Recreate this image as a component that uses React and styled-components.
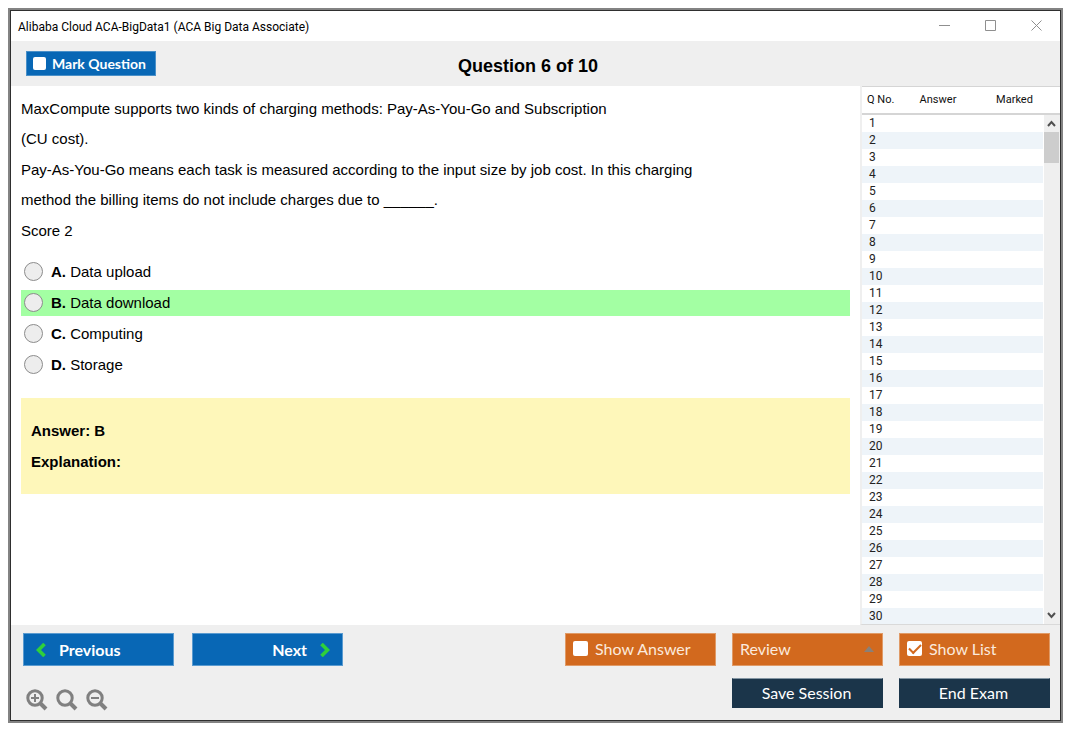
import React, { useState } from "react"
import styled, { createGlobalStyle } from "styled-components"

const GlobalStyle = createGlobalStyle`
  * {
    box-sizing: border-box;
  }
  body {
    margin: 0;
    background-color: #fff;
    color: #000;
    font-family: "Liberation Sans", Arial, sans-serif;
  }
`

const Window = styled.div`
  display: flex;
  flex-direction: column;
  height: calc(100vh - 20px);
  min-height: 400px;
  margin: 8px 12px 12px 8px;
  border: 2px solid #838383;
  outline: 1px solid #2f2f2f;
  outline-offset: -3px;
  padding: 1px;
`

const TitleBar = styled.header`
  display: flex;
  align-items: center;
  flex: none;
  height: 30px;
  padding-left: 7px;
  background-color: #fff;
`

const AppTitle = styled.span`
  flex: 1;
  padding-top: 2px;
  font-family: Roboto, sans-serif;
  font-size: 12px;
`

const WindowButton = styled.button`
  display: flex;
  align-items: center;
  justify-content: center;
  width: 46px;
  height: 28px;
  padding: 0 1px 2px 0;
  border: none;
  background: none;
  color: #8f8f8f;
`

const Toolbar = styled.div`
  display: grid;
  grid-template-columns: 1fr auto 1fr;
  align-items: center;
  flex: none;
  height: 45px;
  padding: 0 30px 0 15px;
  background-color: #efefef;
`

const Heading = styled.h1`
  margin: 0;
  padding-top: 4px;
  font-size: 18px;
  line-height: 22px;
`

const Check = styled.input.attrs({ type: "checkbox" })`
  appearance: none;
  display: grid;
  place-items: center;
  flex: none;
  width: ${({ $size }) => $size}px;
  height: ${({ $size }) => $size}px;
  margin: 0;
  border-radius: 2px;
  background-color: #fff;

  &:checked::before {
    content: "";
    width: 10px;
    height: 5px;
    margin-bottom: 3px;
    border-left: 2px solid #d2691e;
    border-bottom: 2px solid #d2691e;
    transform: rotate(-45deg);
  }
`

const MarkLabel = styled.label`
  display: flex;
  align-items: center;
  justify-self: start;
  gap: 6px;
  width: 130px;
  height: 25px;
  padding: 0 6px;
  border: 1px solid #4a90c8;
  background-color: #0867b5;
  color: #fff;
  font-family: Lato, sans-serif;
  font-size: 14px;
  font-weight: 700;
  white-space: nowrap;
`

const Main = styled.main`
  display: flex;
  flex: 1;
  min-height: 0;
`

const Question = styled.section`
  flex: 1;
  min-width: 0;
  padding: 8px 10px;
  overflow: auto;
  font-size: 15px;
`

const Paragraph = styled.p`
  margin: 0 0 1px;
  line-height: 30px;
`

const Options = styled.div`
  display: grid;
  gap: 5px;
  margin: 13px 0 20px;
`

const Option = styled.label`
  display: flex;
  align-items: center;
  gap: 8px;
  height: 26px;
  padding: 0 0 2px 3px;
  background-color: ${({ $correct }) => ($correct ? "#a3ffa3" : "transparent")};
`

const Radio = styled.input.attrs({ type: "radio" })`
  appearance: none;
  width: 19px;
  height: 19px;
  margin: 0;
  border: 1px solid #8c8c8c;
  border-radius: 50%;
  background-color: #ededed;

  &:checked {
    box-shadow: inset 0 0 0 4px #ededed;
    background-color: #333;
  }
`

const AnswerBox = styled.div`
  padding: 17px 10px;
  background-color: #fef7ba;
  font-weight: 700;
  line-height: 31px;
`

const ListPanel = styled.aside`
  display: flex;
  flex-direction: column;
  flex: none;
  width: 200px;
  border-left: 2px solid #efefef;
  border-bottom: 1px solid #d9d9d9;
  font-family: Roboto, sans-serif;
  font-size: 11px;
`

const ListBody = styled.div`
  display: flex;
  flex: 1;
  min-height: 0;
`

const ListScroll = styled.div`
  flex: 1;
  overflow-y: auto;
  scrollbar-width: none;
`

const QuestionTable = styled.table`
  width: 100%;
  border-collapse: collapse;
  table-layout: fixed;

  th {
    height: 27px;
    padding: 0;
    border-top: 1px solid #d5d5d5;
    border-bottom: 2px solid #d5d5d5;
    color: #111;
    font-weight: 400;
    white-space: nowrap;
  }
  th:first-child {
    padding-left: 5px;
    text-align: left;
  }
  td {
    height: 17px;
    padding: 0 0 0 7px;
    color: #222;
    font-size: 12px;
    line-height: 17px;
  }
  tbody tr:nth-child(even) {
    background-color: #eef4f9;
  }
`

const NumberCol = styled.col`
  width: 45px;
`

const AnswerCol = styled.col`
  width: 62px;
`

const ScrollTrack = styled.div`
  display: flex;
  flex-direction: column;
  justify-content: space-between;
  width: 16px;
  margin-left: 1px;
  background-color: #efefef;
`

const ScrollButton = styled.button`
  display: flex;
  align-items: center;
  justify-content: center;
  height: 17px;
  padding: 0 2px 0 0;
  border: none;
  background: none;
  color: #505050;
`

const ScrollThumb = styled.div`
  height: 31px;
  margin-right: 1px;
  margin-bottom: auto;
  background-color: #cdcdcd;
`

const Footer = styled.footer`
  display: flex;
  justify-content: space-between;
  flex: none;
  padding: 8px 10px 9px 12px;
  background-color: #efefef;
  font-family: Lato, sans-serif;
`

const FooterLeft = styled.div`
  display: flex;
  flex-direction: column;
  gap: 23px;
`

const NavRow = styled.div`
  display: flex;
  gap: 18px;
`

const NavButton = styled.button`
  display: flex;
  align-items: center;
  justify-content: ${({ $end }) => ($end ? "flex-end" : "flex-start")};
  gap: 13px;
  width: 151px;
  height: 33px;
  padding: 0 12px;
  border: 1px solid #5a9bd0;
  background-color: #0867b5;
  color: #fff;
  font-family: inherit;
  font-size: 16px;
  font-weight: 700;
`

const ZoomRow = styled.div`
  display: flex;
  gap: 8px;
  padding-left: 3px;
`

const ZoomButton = styled.button`
  display: flex;
  padding: 0;
  border: none;
  background: none;
  color: #808080;
`

const FooterRight = styled.div`
  display: grid;
  grid-template-columns: repeat(3, 151px);
  grid-template-rows: 33px 30px;
  align-content: start;
  gap: 12px 16px;
`

const ToggleLabel = styled.label`
  display: flex;
  align-items: center;
  gap: 7px;
  padding: 0 7px 2px;
  border: 1px solid #e09a66;
  background-color: #d2691e;
  color: #fbeadd;
  font-size: 16px;
`

const ReviewBox = styled.div`
  position: relative;
  display: flex;

  svg {
    position: absolute;
    top: 13px;
    right: 9px;
    pointer-events: none;
  }
`

const ReviewSelect = styled.select`
  appearance: none;
  width: 100%;
  padding: 0 7px 2px;
  border: 1px solid #e09a66;
  border-radius: 0;
  background-color: #d2691e;
  color: #fbeadd;
  font-family: inherit;
  font-size: 16px;
`

const SessionButton = styled.button`
  grid-column: ${({ $column }) => $column};
  padding: 0 2px 2px 0;
  border: 1px solid #1b354a;
  border-top-color: #8496a3;
  background-color: #1b354a;
  color: #fff;
  font-family: inherit;
  font-size: 16px;
`

const paragraphs = [
  ["MaxCompute supports two kinds of charging methods: Pay-As-You-Go and Subscription", "(CU cost)."],
  [
    "Pay-As-You-Go means each task is measured according to the input size by job cost. In this charging",
    "method the billing items do not include charges due to ______."
  ],
  ["Score 2"]
]

const options = [
  { key: "A", text: "Data upload" },
  { key: "B", text: "Data download" },
  { key: "C", text: "Computing" },
  { key: "D", text: "Storage" }
]

const questionNumbers = Array.from({ length: 30 }, (_, i) => i + 1)

function Chevron({ d }) {
  return (
    <svg width="10" height="14" viewBox="0 0 10 14" fill="none" stroke="#2fd03a" strokeWidth="3.6">
      <path d={d} />
    </svg>
  )
}

function Magnifier({ sign }) {
  return (
    <svg width="22" height="22" viewBox="0 0 22 22" fill="none" stroke="currentColor">
      <circle cx="9" cy="9" r="7.2" strokeWidth="3" />
      <path d="M14 14L20 20" strokeWidth="4" />
      {sign && <path d={sign} strokeWidth="2" />}
    </svg>
  )
}

function Columns() {
  return (
    <colgroup>
      <NumberCol />
      <AnswerCol />
      <col />
    </colgroup>
  )
}

function QuestionList() {
  return (
    <ListPanel>
      <QuestionTable>
        <Columns />
        <thead>
          <tr>
            <th scope="col">Q No.</th>
            <th scope="col">Answer</th>
            <th scope="col">Marked</th>
          </tr>
        </thead>
      </QuestionTable>
      <ListBody>
        <ListScroll>
          <QuestionTable aria-label="Questions">
            <Columns />
            <tbody>
              {questionNumbers.map(n => (
                <tr key={n}>
                  <td>{n}</td>
                  <td />
                  <td />
                </tr>
              ))}
            </tbody>
          </QuestionTable>
        </ListScroll>
        <ScrollTrack>
          <ScrollButton aria-label="Scroll up">
            <svg width="9" height="7" viewBox="0 0 9 7" fill="none" stroke="currentColor" strokeWidth="2">
              <path d="M1 6L4.5 2L8 6" />
            </svg>
          </ScrollButton>
          <ScrollThumb />
          <ScrollButton aria-label="Scroll down">
            <svg width="9" height="7" viewBox="0 0 9 7" fill="none" stroke="currentColor" strokeWidth="2">
              <path d="M1 1L4.5 5L8 1" />
            </svg>
          </ScrollButton>
        </ScrollTrack>
      </ListBody>
    </ListPanel>
  )
}

function App() {
  const [marked, setMarked] = useState(false)
  const [showAnswer, setShowAnswer] = useState(false)
  const [showList, setShowList] = useState(true)
  const [selected, setSelected] = useState("")

  return (
    <>
      <GlobalStyle />
      <Window>
        <TitleBar>
          <AppTitle>Alibaba Cloud ACA-BigData1 (ACA Big Data Associate)</AppTitle>
          <WindowButton aria-label="Minimize">
            <svg width="11" height="11" stroke="currentColor">
              <path d="M0 5.5H11" />
            </svg>
          </WindowButton>
          <WindowButton aria-label="Maximize">
            <svg width="11" height="11" fill="none" stroke="currentColor">
              <path d="M0.5 0.5H10.5V10.5H0.5Z" />
            </svg>
          </WindowButton>
          <WindowButton aria-label="Close">
            <svg width="11" height="11" stroke="currentColor">
              <path d="M0.5 0.5L10.5 10.5M10.5 0.5L0.5 10.5" />
            </svg>
          </WindowButton>
        </TitleBar>

        <Toolbar>
          <MarkLabel>
            <Check $size={13} checked={marked} onChange={e => setMarked(e.target.checked)} />
            Mark Question
          </MarkLabel>
          <Heading>Question 6 of 10</Heading>
        </Toolbar>

        <Main>
          <Question>
            {paragraphs.map(lines => (
              <Paragraph key={lines[0]}>
                {lines.map((line, i) => (
                  <React.Fragment key={line}>
                    {i > 0 && <br />}
                    {line}
                  </React.Fragment>
                ))}
              </Paragraph>
            ))}
            <Options role="radiogroup" aria-label="Choices">
              {options.map(({ key, text }) => (
                <Option key={key} $correct={key === "B"}>
                  <Radio
                    name="choice"
                    value={key}
                    checked={selected === key}
                    onChange={() => setSelected(key)}
                  />
                  <span>
                    <b>{key}.</b> {text}
                  </span>
                </Option>
              ))}
            </Options>
            <AnswerBox>
              <div>Answer: B</div>
              <div>Explanation:</div>
            </AnswerBox>
          </Question>
          {showList && <QuestionList />}
        </Main>

        <Footer>
          <FooterLeft>
            <NavRow>
              <NavButton>
                <Chevron d="M8.5 1L2.5 7L8.5 13" />
                Previous
              </NavButton>
              <NavButton $end>
                Next
                <Chevron d="M1.5 1L7.5 7L1.5 13" />
              </NavButton>
            </NavRow>
            <ZoomRow>
              <ZoomButton aria-label="Zoom in">
                <Magnifier sign="M5 9H13M9 5V13" />
              </ZoomButton>
              <ZoomButton aria-label="Reset zoom">
                <Magnifier />
              </ZoomButton>
              <ZoomButton aria-label="Zoom out">
                <Magnifier sign="M5 9H13" />
              </ZoomButton>
            </ZoomRow>
          </FooterLeft>
          <FooterRight>
            <ToggleLabel>
              <Check $size={15} checked={showAnswer} onChange={e => setShowAnswer(e.target.checked)} />
              Show Answer
            </ToggleLabel>
            <ReviewBox>
              <ReviewSelect aria-label="Review">
                <option>Review</option>
              </ReviewSelect>
              <svg width="10" height="6" fill="#8a8078">
                <path d="M0 6L5 0L10 6Z" />
              </svg>
            </ReviewBox>
            <ToggleLabel>
              <Check $size={15} checked={showList} onChange={e => setShowList(e.target.checked)} />
              Show List
            </ToggleLabel>
            <SessionButton $column={2}>Save Session</SessionButton>
            <SessionButton $column={3}>End Exam</SessionButton>
          </FooterRight>
        </Footer>
      </Window>
    </>
  )
}

export default App
